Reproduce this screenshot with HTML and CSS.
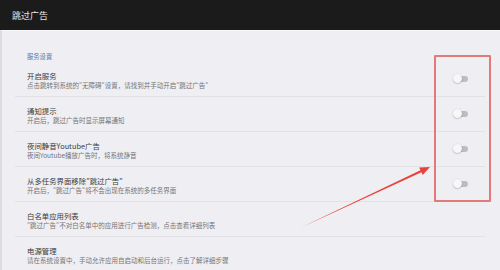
FILE: index.html
```html
<!DOCTYPE html>
<html lang="zh-CN">
<head>
  <meta charset="UTF-8" />
  <meta name="viewport" content="width=device-width, initial-scale=1.0"/>
  <title>跳过广告</title>
  <link rel="stylesheet" href="styles.css">
</head>
<body>
  <div class="app">
    <div class="top-bar">跳过广告</div>

    <div class="content">
      <div class="section-title">服务设置</div>

      <div class="setting-list">
        <div class="setting-row">
          <div class="setting-text">
            <div class="setting-name">开启服务</div>
            <div class="setting-desc">点击跳转到系统的"无障碍"设置，请找到并手动开启"跳过广告"</div>
          </div>
          <span class="switch"></span>
        </div>

        <div class="setting-row">
          <div class="setting-text">
            <div class="setting-name">通知提示</div>
            <div class="setting-desc">开启后，跳过广告时显示屏幕通知</div>
          </div>
          <span class="switch"></span>
        </div>

        <div class="setting-row">
          <div class="setting-text">
            <div class="setting-name">夜间静音Youtube广告</div>
            <div class="setting-desc">夜间Youtube播放广告时，将系统静音</div>
          </div>
          <span class="switch"></span>
        </div>

        <div class="setting-row">
          <div class="setting-text">
            <div class="setting-name">从多任务界面移除"跳过广告"</div>
            <div class="setting-desc">开启后，"跳过广告"将不会出现在系统的多任务界面</div>
          </div>
          <span class="switch"></span>
        </div>

        <div class="setting-row">
          <div class="setting-text">
            <div class="setting-name">白名单应用列表</div>
            <div class="setting-desc">"跳过广告"不对白名单中的应用进行广告检测，点击查看详细列表</div>
          </div>
        </div>

        <div class="setting-row">
          <div class="setting-text">
            <div class="setting-name">电源管理</div>
            <div class="setting-desc">请在系统设置中，手动允许应用自启动和后台运行，点击了解详细步骤</div>
          </div>
        </div>
      </div>
    </div>

    <!-- annotation: red box + arrow -->
    <div class="mark-box"></div>
    <svg class="mark-arrow" width="500" height="270" viewBox="0 0 500 270">
      <polygon points="300,228 420.4,170.2 419.2,167.6 430,167 422.7,174.9 421.4,172.2" fill="#e8433b"/>
    </svg>
  </div>
</body>
</html>
```

FILE: styles.css
```css
body {
  margin: 0;
  font-family: "Noto Sans CJK SC", "Noto Sans", sans-serif;
  background-color: #efeff3;
}

.app {
  position: relative;
  width: 500px;
  height: 270px;
  overflow: hidden;
}

.top-bar {
  height: 30px;
  line-height: 31px;
  padding-left: 12px;
  background-color: #1b1b1b;
  color: #e6e6e6;
  font-size: 9px;
}

.content {
  border-left: 2px solid #dcdce0;
  border-top: 1px solid #f7f7fa;
  padding-top: 21px;
}

.section-title {
  margin-left: 25px;
  font-size: 6.3px;
  line-height: 10px;
  color: #4f78b0;
}

.setting-list {
  margin: 0 15px 0 13px;
}

.setting-row {
  display: flex;
  align-items: center;
  justify-content: space-between;
  padding: 9px 17px 6px 12px;
  border-bottom: 1px solid #e2e2e6;
}

.setting-name {
  font-size: 7.4px;
  line-height: 10px;
  color: #3a3a3a;
}

.setting-desc {
  font-size: 6.5px;
  line-height: 9px;
  color: #747474;
}

.switch {
  position: relative;
  width: 15px;
  height: 10px;
  margin-top: -3px;
}

.switch::before {
  content: "";
  position: absolute;
  left: 3px;
  top: 2px;
  width: 12px;
  height: 6px;
  border-radius: 3px;
  background-color: #bdbdc1;
}

.switch::after {
  content: "";
  position: absolute;
  left: 0;
  top: 0;
  width: 9px;
  height: 9px;
  border-radius: 50%;
  background-color: #f7f7f7;
  box-shadow: 0 0.5px 1.5px rgba(0, 0, 0, 0.3);
}

.mark-box {
  position: absolute;
  left: 434px;
  top: 55px;
  width: 53px;
  height: 143px;
  border: 2px solid #e27a7a;
  border-radius: 1px;
}

.mark-arrow {
  position: absolute;
  left: 0;
  top: 0;
}
```
